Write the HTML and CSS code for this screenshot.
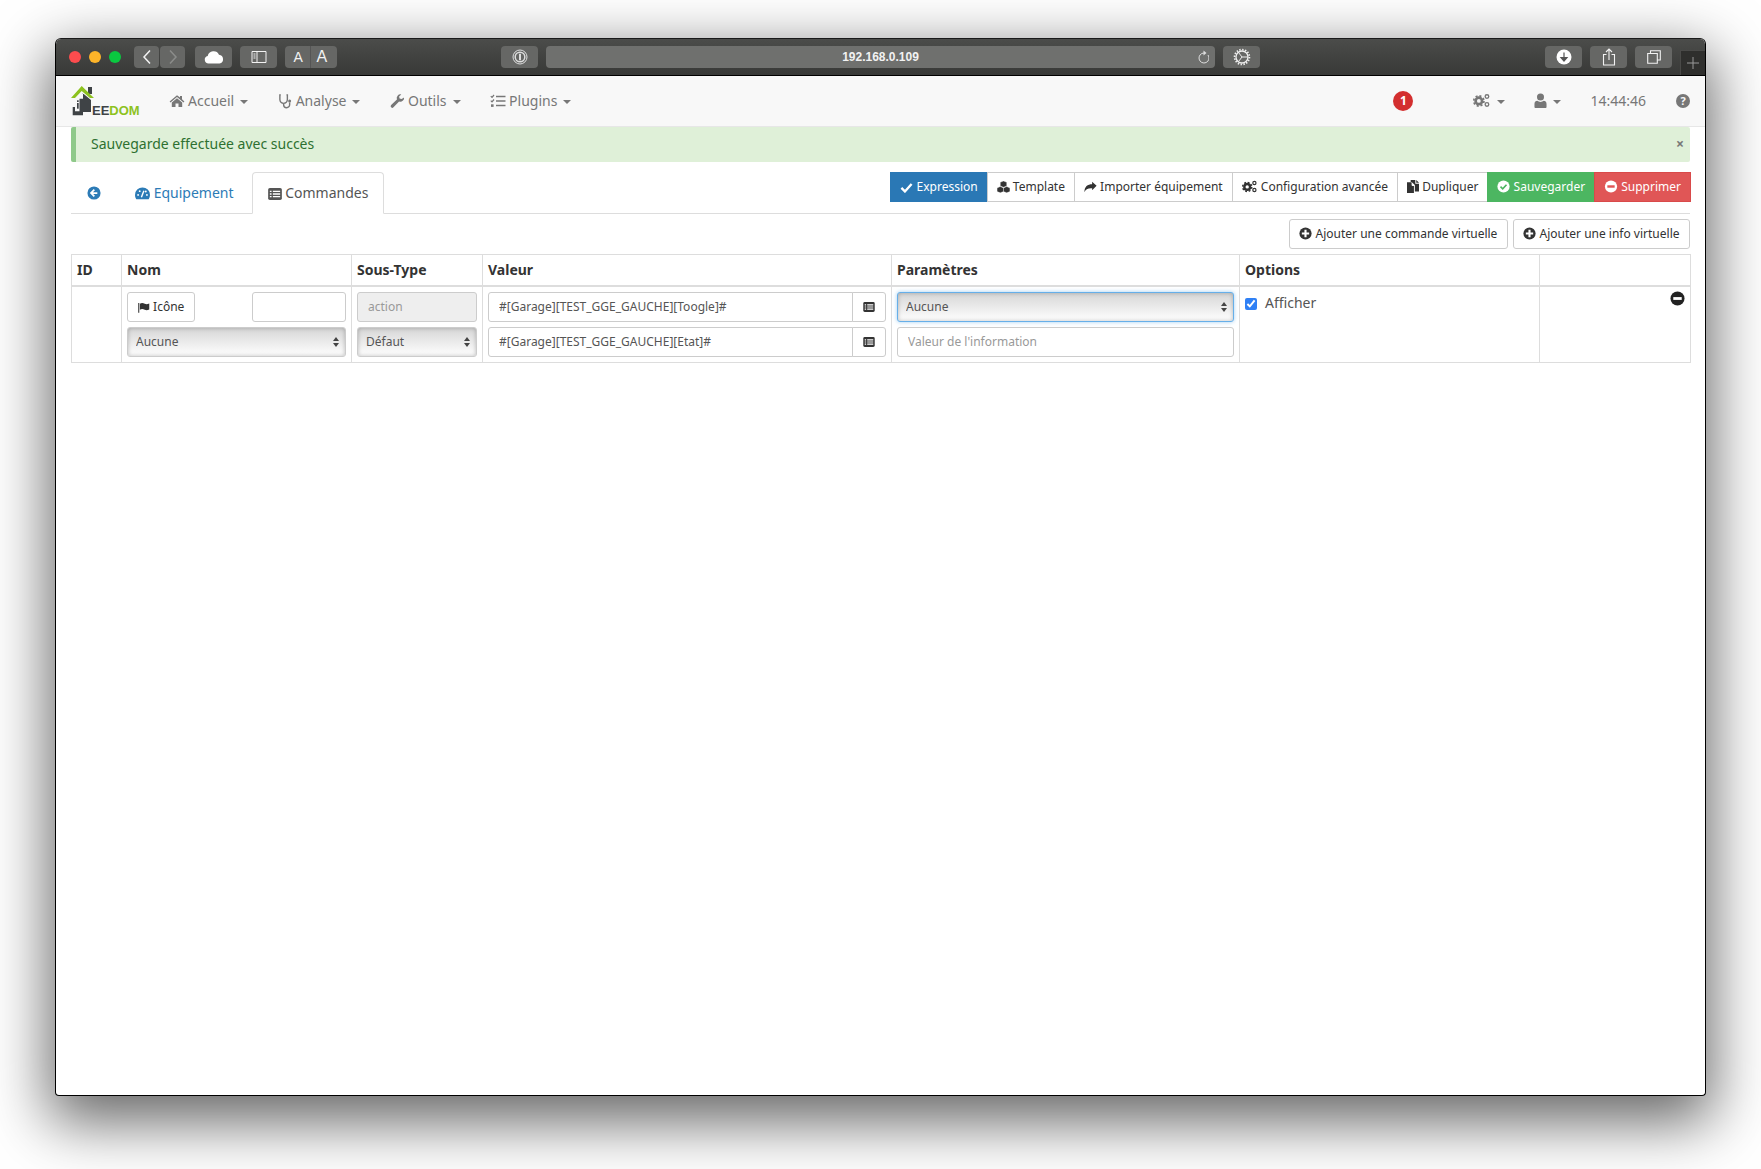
FILE: index.html
```html
<!DOCTYPE html>
<html lang="fr">
<head>
    <meta charset="UTF-8">
    <title>Jeedom</title>
    <link rel="stylesheet" href="styles.css">
</head>
<body>
    <svg class="sprite" width="0" height="0">
        <symbol id="i-home" viewBox="0 0 16 16"><path d="M8 2.2 0.6 8.4l.9 1L8 4l6.500 5.400.9-1L13 6.300V3h-2v1.600z"/><path d="M8 5.200 2.800 9.500V14h3.700v-3.500h3V14h3.700V9.500z"/></symbol>
        <symbol id="i-stetho" viewBox="0 0 16 16"><path d="M3 1.500H2v5a4 4 0 0 0 8 0v-5H9M6 10.500V12a3.200 3.200 0 0 0 6.400 0V9.500" fill="none" stroke="currentColor" stroke-width="1.500"/><circle cx="12.400" cy="8" r="1.600"/></symbol>
        <symbol id="i-wrench" viewBox="0 0 16 16"><path d="M15 4.200a4 4 0 0 1-5.300 4.300l-6 6.200a1.700 1.700 0 0 1-2.500-2.400l6.200-6A4 4 0 0 1 12 1l-2.300 2.300.5 2.100 2.200.5z"/></symbol>
        <symbol id="i-tasks" viewBox="0 0 16 16"><path d="M6 3.500h9.500M6 8h9.500M6 12.500h9.500" stroke="currentColor" stroke-width="1.700" fill="none"/><path d="M.8 3.200 2 4.400 4 2M.8 7.700 2 8.900 4 6.500" stroke="currentColor" stroke-width="1.200" fill="none"/><rect x="1" y="11.300" width="2.600" height="2.600"/></symbol>
        <symbol id="i-gears" viewBox="0 0 20 16"><circle cx="6.500" cy="8.500" r="3.600" fill="none" stroke="currentColor" stroke-width="3"/><circle cx="6.500" cy="8.500" r="5.700" fill="none" stroke="currentColor" stroke-width="1.800" stroke-dasharray="2.300 2.170"/><circle cx="15.500" cy="3.600" r="2" fill="none" stroke="currentColor" stroke-width="1.500"/><circle cx="15.500" cy="12.400" r="2" fill="none" stroke="currentColor" stroke-width="1.500"/></symbol>
        <symbol id="i-user" viewBox="0 0 14 16"><circle cx="7" cy="4.300" r="3.800"/><path d="M.5 15v-3.200C.5 9.500 2 8.300 3.500 8.300c1 .8 2.200 1.200 3.500 1.200s2.500-.4 3.500-1.200c1.500 0 3 1.200 3 3.500V15a1 1 0 0 1-1 1h-11a1 1 0 0 1-1-1z"/></symbol>
        <symbol id="i-back" viewBox="0 0 16 16"><circle cx="8" cy="8" r="7.500"/><path d="M8.400 4.200 4.600 8l3.800 3.800M5 8h6.800" fill="none" stroke="#fff" stroke-width="2"/></symbol>
        <symbol id="i-tacho" viewBox="0 0 16 14"><path d="M8 1a8 8 0 0 0-8 8c0 1.700.5 3.300 1.400 4.600h13.200A8 8 0 0 0 16 9a8 8 0 0 0-8-8z"/><path d="M6.800 11.500 9.500 4.500" stroke="#fff" stroke-width="1.500"/><circle cx="3.300" cy="9" r="1" fill="#fff"/><circle cx="5" cy="5" r="1" fill="#fff"/><circle cx="12.700" cy="9" r="1" fill="#fff"/><circle cx="11.500" cy="5.400" r="1" fill="#fff"/></symbol>
        <symbol id="i-list" viewBox="0 0 16 14"><rect width="16" height="14" rx="2"/><path d="M2 4h2M2 7h2M2 10h2M5.500 4H14M5.500 7H14M5.500 10H14" stroke="#fff" stroke-width="1.500"/></symbol>
        <symbol id="i-flag" viewBox="0 0 16 14"><path d="M1 1v13" stroke="currentColor" stroke-width="1.400"/><path d="M2.500 2C5 .5 7 1.200 9 2s3.500.7 6-.3v8c-2.500 1-4 1.100-6 .3s-4-1.500-6.500 0z"/></symbol>
        <symbol id="i-check" viewBox="0 0 16 14"><path d="M1.500 7.500 6 12l8.500-9.500" fill="none" stroke="currentColor" stroke-width="3"/></symbol>
        <symbol id="i-cubes" viewBox="0 0 16 15"><path d="M8 0 12 1.700v4.400L8 7.800 4 6.100V1.700zM4 7 8 8.700v4.400L4 14.800 0 13.100V8.700zM12 7l4 1.700v4.400l-4 1.700-4-1.700V8.700z" stroke="#fff" stroke-width=".4"/></symbol>
        <symbol id="i-share" viewBox="0 0 16 14"><path d="M15.500 5.500 10 .5v3C4.500 3.500.5 6 .5 13.500c1.300-4 4.500-5.300 9.500-5v2.500z"/></symbol>
        <symbol id="i-copy" viewBox="1 1 13 14"><path d="M1 3.500h5v3c0 .6.400 1 1 1h1.500V15H1z"/><path d="M5 1h5v4h4v8.500H9.500V6.500L6 3H5z"/><path d="M11 1l3 3h-3z"/></symbol>
        <symbol id="i-ok" viewBox="0 0 16 16"><circle cx="8" cy="8" r="7.500"/><path d="M4.300 8.200 7 10.800l4.700-5" fill="none" stroke="var(--cut)" stroke-width="2"/></symbol>
        <symbol id="i-minus" viewBox="0 0 16 16"><circle cx="8" cy="8" r="7.500"/><rect x="3.500" y="6.500" width="9" height="3" fill="var(--cut)"/></symbol>
        <symbol id="i-plus" viewBox="0 0 16 16"><circle cx="8" cy="8" r="7.500"/><path d="M8 3.500v9M3.500 8h9" stroke="var(--cut)" stroke-width="2.600"/></symbol>
    </svg>

    <div class="window">
        <div class="titlebar">
            <div class="lights">
                <span class="light red"></span>
                <span class="light yellow"></span>
                <span class="light green"></span>
            </div>
            <div class="tool-pair">
                <span class="tool nav-btn"><svg width="10" height="16" viewBox="0 0 10 16"><path d="M8 1.500 2 8l6 6.500" fill="none" stroke="#f2f2f2" stroke-width="1.500"/></svg></span>
                <span class="tool nav-btn"><svg width="10" height="16" viewBox="0 0 10 16"><path d="M2 1.500 8 8l-6 6.500" fill="none" stroke="#8b8c8a" stroke-width="1.500"/></svg></span>
            </div>
            <span class="tool cloud-btn"><svg width="20" height="14" viewBox="0 0 20 14"><path d="M4.500 13.500a3.800 3.800 0 0 1-.8-7.500A6 6 0 0 1 15 4.800a4.400 4.400 0 0 1 .5 8.700z" fill="#fff"/></svg></span>
            <span class="tool side-btn"><svg width="16" height="14" viewBox="0 0 16 14"><path d="M1 1.500h14v11H1zM6 1.500v11M2.500 4h2M2.500 6h2M2.500 8h2" fill="none" stroke="#f2f2f2"/></svg></span>
            <div class="tool font-btn"><span class="small-a">A</span><span class="big-a">A</span></div>
            <span class="tool pass-btn"><svg width="16" height="16" viewBox="0 0 16 16"><circle cx="8" cy="8" r="7" fill="none" stroke="#ddd"/><circle cx="8" cy="8" r="4.800" fill="none" stroke="#ddd" stroke-width="1.500"/><path d="M8 4.800v6.400" stroke="#ddd" stroke-width="2"/></svg></span>
            <div class="tool address">
                <span class="url">192.168.0.109</span>
                <svg class="reload" width="12" height="14" viewBox="0 0 12 14"><path d="M7 3a5 5 0 1 0 4 2" fill="none" stroke="#ddd"/><path d="M6.500 .5 9.500 3l-3 2.500z" fill="#ddd"/></svg>
            </div>
            <span class="tool gear-btn"><svg width="18" height="18" viewBox="0 0 18 18"><circle cx="9" cy="9" r="6" fill="none" stroke="#eee" stroke-width="1.300"/><circle cx="9" cy="9" r="7.400" fill="none" stroke="#eee" stroke-width="1.800" stroke-dasharray="1.400 1.500"/><path d="M9 9 5.500 4.500M9 9H15M9 9l-3.500 4.500" stroke="#eee"/></svg></span>
            <div class="title-right">
                <span class="tool wide-btn"><svg width="16" height="16" viewBox="0 0 16 16"><circle cx="8" cy="8" r="7.500" fill="#fff"/><path d="M8 3.500V10M5 8.500l3 3.500 3-3.500z" stroke="#555" fill="#555" stroke-width="1.200"/></svg></span>
                <span class="tool wide-btn"><svg width="14" height="18" viewBox="0 0 14 18"><path d="M4.500 6.500H1.500v10.500h11V6.500H9.500M7 12V1M4 4l3-3 3 3" fill="none" stroke="#f2f2f2" stroke-width="1.100"/></svg></span>
                <span class="tool wide-btn"><svg width="14" height="14" viewBox="0 0 14 14"><path d="M3.500 3.500V.7h9.800v9.300h-3M.7 3.500h9.600v9.800H.7z" fill="none" stroke="#f2f2f2" stroke-width="1.100"/></svg></span>
            </div>
            <span class="new-tab"><svg width="12" height="12" viewBox="0 0 12 12"><path d="M6 0v12M0 6h12" stroke="#999"/></svg></span>
        </div>

        <nav class="navbar">
            <a class="brand">
                <svg class="brand-mark" width="25" height="31" viewBox="0 0 25 31">
                    <path d="M11.500 8 20 15V27H12V8z" fill="#3f4346"/>
                    <rect x="17" y="2" width="4" height="7" fill="#3f4346"/>
                    <path d="M8.500 13.700H12V30.300H1.700V22H4V26.300H8.500z" fill="#3f4346"/>
                    <rect x="6" y="15.300" width="1.700" height="1.700" fill="#3f4346"/>
                    <rect x="6" y="18" width="1.700" height="5.700" fill="#3f4346"/>
                    <path d="M10.700 1 23 13H19L10.700 6 4 13H0z" fill="#8dc21f"/>
                </svg>
                <span class="brand-text"><span class="brand-dark">EE</span><span class="brand-green">DOM</span></span>
            </a>
            <ul class="menu">
                <li><svg class="ico" width="16" height="16"><use href="#i-home"/></svg> Accueil <b class="caret"></b></li>
                <li><svg class="ico" width="15" height="16"><use href="#i-stetho"/></svg> Analyse <b class="caret"></b></li>
                <li><svg class="ico" width="15" height="16"><use href="#i-wrench"/></svg> Outils <b class="caret"></b></li>
                <li><svg class="ico" width="16" height="16"><use href="#i-tasks"/></svg> Plugins <b class="caret"></b></li>
            </ul>
            <div class="nav-right">
                <span class="badge">1</span>
                <span class="nav-item gears"><svg width="18" height="15"><use href="#i-gears"/></svg><b class="caret"></b></span>
                <span class="nav-item user"><svg width="13" height="15"><use href="#i-user"/></svg><b class="caret"></b></span>
                <span class="clock">14:44:46</span>
                <span class="help">?</span>
            </div>
        </nav>

        <main class="content">
            <div class="alert">
                <span>Sauvegarde effectuée avec succès</span>
                <span class="alert-close">×</span>
            </div>

            <div class="tabbar">
                <ul class="tabs">
                    <li class="tab"><svg class="ico" width="14" height="14"><use href="#i-back"/></svg></li>
                    <li class="tab"><svg class="ico" width="15" height="14"><use href="#i-tacho"/></svg> Equipement</li>
                    <li class="tab active"><svg class="ico" width="14" height="12"><use href="#i-list"/></svg> Commandes</li>
                </ul>
                <div class="btn-group">
                    <a class="btn primary"><svg width="13" height="11"><use href="#i-check"/></svg> Expression</a>
                    <a class="btn"><svg width="13" height="12"><use href="#i-cubes"/></svg> Template</a>
                    <a class="btn"><svg width="13" height="12"><use href="#i-share"/></svg> Importer équipement</a>
                    <a class="btn"><svg width="16" height="13"><use href="#i-gears"/></svg> Configuration avancée</a>
                    <a class="btn"><svg width="12" height="13"><use href="#i-copy"/></svg> Dupliquer</a>
                    <a class="btn success"><svg width="13" height="13"><use href="#i-ok"/></svg> Sauvegarder</a>
                    <a class="btn danger"><svg width="14" height="13"><use href="#i-minus"/></svg> Supprimer</a>
                </div>
            </div>

            <div class="add-row">
                <a class="btn rounded"><svg width="13" height="13"><use href="#i-plus"/></svg> Ajouter une commande virtuelle</a>
                <a class="btn rounded"><svg width="13" height="13"><use href="#i-plus"/></svg> Ajouter une info virtuelle</a>
            </div>

            <table class="cmd-table">
                <colgroup>
                    <col class="c-id"><col class="c-nom"><col class="c-type"><col class="c-val"><col class="c-par"><col class="c-opt"><col class="c-act">
                </colgroup>
                <thead>
                    <tr>
                        <th>ID</th>
                        <th>Nom</th>
                        <th>Sous-Type</th>
                        <th>Valeur</th>
                        <th>Paramètres</th>
                        <th>Options</th>
                        <th></th>
                    </tr>
                </thead>
                <tbody>
                    <tr>
                        <td></td>
                        <td>
                            <div class="name-top">
                                <a class="btn rounded icon-btn"><svg width="12" height="11"><use href="#i-flag"/></svg> Icône</a>
                                <input class="field name-input" type="text">
                            </div>
                            <select class="field pick"><option>Aucune</option></select>
                        </td>
                        <td>
                            <input class="field" type="text" value="action" disabled>
                            <select class="field pick"><option>Défaut</option></select>
                        </td>
                        <td>
                            <div class="input-group">
                                <input class="field" type="text" value="#[Garage][TEST_GGE_GAUCHE][Toogle]#">
                                <span class="addon"><svg width="12" height="10"><use href="#i-list"/></svg></span>
                            </div>
                            <div class="input-group">
                                <input class="field" type="text" value="#[Garage][TEST_GGE_GAUCHE][Etat]#">
                                <span class="addon"><svg width="12" height="10"><use href="#i-list"/></svg></span>
                            </div>
                        </td>
                        <td>
                            <select class="field pick focused"><option>Aucune</option></select>
                            <input class="field" type="text" placeholder="Valeur de l'information">
                        </td>
                        <td class="options-cell">
                            <label class="show-check"><input type="checkbox" checked> Afficher</label>
                        </td>
                        <td class="action-cell">
                            <svg class="remove" width="15" height="15"><use href="#i-minus"/></svg>
                        </td>
                    </tr>
                </tbody>
            </table>
        </main>
    </div>
</body>
</html>
```
FILE: styles.css
```css
* {
    box-sizing: border-box;
}

html, body {
    margin: 0;
    background-color: #fff;
}

body {
    --cut: #fff;
    padding: 38px 55px 74px;
    font-family: "Noto Sans", "Open Sans", sans-serif;
    font-size: 12px;
    color: #333;
}

.sprite {
    display: block;
}

svg {
    fill: currentColor;
}

.window {
    width: 1651px;
    height: 1058px;
    background-color: #fff;
    border: 1px solid #000;
    border-top-color: #1a1a1a;
    border-radius: 6px 6px 4px 4px;
    box-shadow: 0 20px 60px 6px rgba(0, 0, 0, 0.6);
    overflow: hidden;
}

/* Safari title bar */
.titlebar {
    display: flex;
    align-items: center;
    height: 37px;
    padding-bottom: 1px;
    position: relative;
    background: linear-gradient(#4b4c4a, #383937);
    border-bottom: 1px solid #000;
}

.lights {
    display: flex;
    gap: 8px;
    margin-left: 13px;
}

.light {
    width: 12px;
    height: 12px;
    border-radius: 50%;
}

.red { background-color: #fc4c4e; }
.yellow { background-color: #fdb429; }
.green { background-color: #0ac840; }

.tool {
    display: flex;
    align-items: center;
    justify-content: center;
    height: 22px;
    color: #f2f2f2;
    background-color: #666765;
    border-radius: 4px;
}

.tool-pair {
    display: flex;
    gap: 1px;
    margin-left: 13px;
}

.nav-btn {
    width: 25px;
}

.cloud-btn {
    width: 37px;
    margin-left: 10px;
}

.side-btn {
    width: 37px;
    margin-left: 8px;
}

.font-btn {
    width: 52px;
    margin-left: 8px;
    font-family: "Liberation Sans", sans-serif;
}

.font-btn span {
    flex: 1;
    text-align: center;
    line-height: 22px;
}

.small-a {
    padding-left: 2px;
    font-size: 14px;
    border-right: 1px solid #555;
}

.big-a {
    padding-right: 4px;
    font-size: 16px;
}

.pass-btn {
    width: 37px;
    margin-left: 164px;
}

.address {
    position: relative;
    width: 669px;
    margin-left: 8px;
    background-color: #6f706e;
}

.url {
    padding-top: 1px;
    font-size: 12px;
    font-weight: 700;
    font-family: "Liberation Sans", sans-serif;
}

.reload {
    position: absolute;
    right: 6px;
    top: 4px;
}

.gear-btn {
    width: 37px;
    margin-left: 8px;
}

.title-right {
    display: flex;
    gap: 8px;
    margin-left: 285px;
}

.wide-btn {
    width: 37px;
}

.new-tab {
    position: absolute;
    right: 0;
    bottom: 0;
    width: 25px;
    height: 25px;
    display: flex;
    align-items: center;
    justify-content: center;
    background-color: #2f2f2d;
    border: 1px solid #4a4a48;
    border-width: 1px 0 0 1px;
}

/* Jeedom navbar */
.navbar {
    display: flex;
    align-items: center;
    height: 51px;
    padding-bottom: 1px;
    background-color: #f8f8f8;
    border-bottom: 1px solid #e7e7e7;
    font-size: 14px;
    color: #777;
}

.brand {
    display: flex;
    align-items: flex-end;
    width: 98px;
    height: 31px;
    margin-left: 15px;
}

.brand-text {
    font-family: "Liberation Sans", sans-serif;
    font-weight: 700;
    font-size: 13px;
    line-height: 11px;
    margin-left: -4px;
}

.brand-dark { color: #3f4346; }
.brand-green { color: #8dc21f; }

.menu {
    display: flex;
    gap: 29.500px;
    margin: 0;
    padding: 0;
    list-style: none;
}

.menu li {
    display: flex;
    align-items: center;
    gap: 3px;
}

.caret {
    display: inline-block;
    width: 0;
    height: 0;
    margin-left: 3px;
    margin-top: 2px;
    border-top: 4px solid;
    border-left: 4px solid transparent;
    border-right: 4px solid transparent;
}

.nav-right {
    display: flex;
    align-items: center;
    margin-left: auto;
    padding-right: 15px;
}

.nav-item {
    display: flex;
    align-items: center;
    gap: 3px;
}

.badge {
    width: 20px;
    height: 20px;
    line-height: 20px;
    text-align: center;
    border-radius: 50%;
    font-size: 12px;
    font-weight: 700;
    color: #fff;
    background-color: #d32f2f;
}

.gears {
    margin-left: 60px;
}

.user {
    margin-left: 29px;
}

.clock {
    margin-left: 29px;
}

.help {
    width: 14px;
    height: 14px;
    line-height: 14px;
    margin-left: 30px;
    text-align: center;
    border-radius: 50%;
    font-size: 11px;
    font-weight: 700;
    color: #f8f8f8;
    background-color: #777;
}

/* Page */
.content {
    padding: 0 15px;
}

.alert {
    display: flex;
    align-items: center;
    justify-content: space-between;
    height: 35px;
    padding: 0 6px 2px 15px;
    background-color: #dff0d8;
    border-left: 5px solid #8fc98a;
    border-radius: 2px;
    font-size: 14px;
    color: #2e7031;
}

.alert-close {
    font-size: 14px;
    font-weight: 700;
    color: #777;
}

.tabbar {
    display: flex;
    justify-content: space-between;
    align-items: flex-start;
    height: 52px;
    padding-top: 10px;
    border-bottom: 1px solid #ddd;
}

.tabs {
    display: flex;
    gap: 2px;
    margin: 0;
    padding: 0;
    list-style: none;
}

.tab {
    height: 42px;
    padding: 0 15px;
    line-height: 40px;
    font-size: 14px;
    color: #2c7bb6;
    border: 1px solid transparent;
    border-radius: 4px 4px 0 0;
}

.tab.active {
    height: 42px;
    color: #555;
    background-color: #fff;
    border-color: #ddd #ddd #fff;
}

.ico {
    vertical-align: -2px;
}

.btn-group {
    display: flex;
    margin-right: -1px;
}

.btn {
    display: inline-block;
    height: 30px;
    padding: 0 9px;
    line-height: 28px;
    font-size: 12px;
    color: #333;
    white-space: nowrap;
    background-color: #fff;
    border: 1px solid #ccc;
}

.btn svg {
    vertical-align: -2px;
}

.btn-group .btn + .btn {
    margin-left: -1px;
}

.btn.primary {
    color: #fff;
    background-color: #2a78b5;
    border-color: #2a78b5;
}

.btn.success {
    color: #fff;
    background-color: #4cb661;
    border-color: #4cb661;
    --cut: #4cb661;
}

.btn.danger {
    color: #fff;
    background-color: #e05656;
    border-color: #d94a4a;
    --cut: #e05656;
}

.btn.rounded {
    padding: 0 9.500px;
    border-radius: 3px;
}

.add-row {
    display: flex;
    justify-content: flex-end;
    gap: 5px;
    margin-top: 5px;
}

.cmd-table {
    width: 1619px;
    margin-top: 5px;
    table-layout: fixed;
    border-collapse: collapse;
}

.c-id { width: 50px; }
.c-nom { width: 230px; }
.c-type { width: 131px; }
.c-val { width: 409px; }
.c-par { width: 348px; }
.c-opt { width: 300px; }
.c-act { width: 151px; }

.cmd-table th, .cmd-table td {
    padding: 5px;
    border: 1px solid #ddd;
    text-align: left;
    vertical-align: top;
}

.cmd-table th {
    height: 31px;
    font-size: 14px;
    font-weight: 700;
    line-height: 20px;
    border-bottom-width: 2px;
}

.field {
    display: block;
    width: 100%;
    height: 30px;
    padding: 0 10px 2px;
    font-family: inherit;
    font-size: 12px;
    color: #555;
    background-color: #fff;
    border: 1px solid #ccc;
    border-radius: 3px;
    outline: none;
}

.field::placeholder {
    color: #999;
    opacity: 1;
}

.field:disabled {
    color: #999;
    background-color: #eee;
}

.pick {
    margin-top: 5px;
    padding: 0 8px 2px;
    -webkit-appearance: none;
    appearance: none;
    background-image:
        url("data:image/svg+xml,%3Csvg xmlns='http://www.w3.org/2000/svg' width='6' height='10'%3E%3Cpath d='M3 0l3 4H0zM3 10l3-4H0z' fill='%23444'/%3E%3C/svg%3E"),
        linear-gradient(#d6d6d6, #fff);
    background-repeat: no-repeat;
    background-position: right 6px center, 0 0;
    box-shadow: inset 0 0 4px rgba(0, 0, 0, 0.25);
}

.pick.focused {
    margin-top: 0;
    border-color: #66afe9;
    box-shadow: inset 0 0 4px rgba(0, 0, 0, 0.25), 0 0 4px rgba(102, 175, 233, 0.6);
}

.pick.focused + .field {
    margin-top: 5px;
}

.name-top {
    display: flex;
    justify-content: space-between;
}

.btn.icon-btn {
    padding: 0 10px;
}

.name-input {
    width: 94px;
}

.input-group {
    display: flex;
}

.input-group + .input-group {
    margin-top: 5px;
}

.input-group .field {
    flex: 1;
    border-radius: 3px 0 0 3px;
}

.addon {
    display: flex;
    align-items: center;
    justify-content: center;
    width: 34px;
    margin-left: -1px;
    background-color: #fff;
    border: 1px solid #ccc;
    border-radius: 0 3px 3px 0;
}

.options-cell, .action-cell {
    position: relative;
}

.show-check {
    display: flex;
    align-items: center;
    gap: 8px;
    height: 20px;
    font-size: 14px;
    color: #555;
}

.show-check input {
    width: 12px;
    height: 12px;
    margin: 3px 0 0;
    accent-color: #2f80f5;
}

.remove {
    position: absolute;
    right: 5px;
    top: 4px;
    color: #222;
}
```
